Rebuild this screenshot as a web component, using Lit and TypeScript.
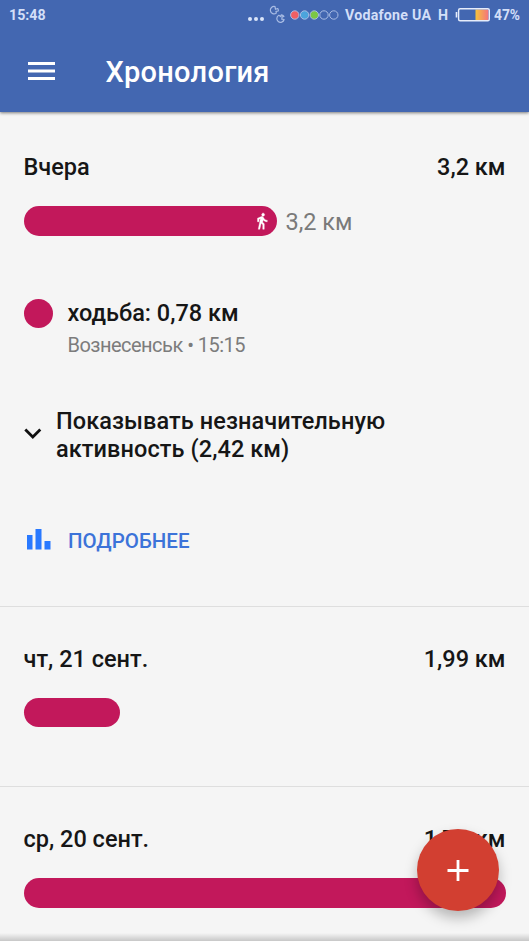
import { LitElement, html, css, svg, nothing } from "lit";
import { customElement, property } from "lit/decorators.js";

const walkIcon = svg`<path fill="#fff" stroke="#fff" stroke-width=".5" d="M13.5 5.500c1.100 0 2-.9 2-2s-.9-2-2-2-2 .9-2 2 .9 2 2 2zM9.800 8.900L7 23h2.100l1.800-8 2.100 2v6h2v-7.500l-2.100-2 .6-3C14.800 12 16.800 13 19 13v-2c-1.900 0-3.500-1-4.300-2.400l-1-1.600c-.4-.6-1-1-1.700-1-.3 0-.5.1-.8.1L6 8.300V13h2V9.600l1.800-.7"/>`;

@customElement("status-bar")
export class StatusBar extends LitElement {
  static styles = css`
    :host { display: flex; height: 30px; align-items: center; color: #d3dff8; font: 700 14.200px/30px Roboto, sans-serif; }
    .time { margin-left: 9px; width: 238px; }
    .status { display: block; flex: none; }
    .carrier { margin-left: 6px; width: 93px; letter-spacing: 0.25px; white-space: nowrap; }
    .net { width: 17px; }
    .battery { display: block; flex: none; margin-right: 4px; }
    .pct { font-size: 13.800px; white-space: nowrap; }
  `;
  render() {
    return html`
      <span class="time">15:48</span>
      <svg class="status" width="92" height="30" viewBox="247 0 92 30">
        <g fill="#dbe5fa">
          <circle cx="250" cy="19" r="2" /><circle cx="256" cy="19" r="2" /><circle cx="262" cy="19" r="2" />
        </g>
        <g fill="none" stroke="#a9bce4" stroke-width="1.2" stroke-linejoin="round">
          <path d="M275 6.600a3.700 3.700 0 1 0 1.300 6.500l-.3-1.800 2.300-.3a3.700 3.700 0 0 0-.5-2.500l-2.300.8z" />
          <path d="M278.800 15.300a3.700 3.700 0 1 0 5.300 4.200l-2.300-.3.300-2.400 1.800-.5a3.700 3.700 0 0 0-2.600-1.500l-.6 1.800z" />
        </g>
        <g stroke="#a9bce4" stroke-width="1">
          <circle cx="294.800" cy="15" r="4.200" fill="#f05f64" />
          <circle cx="304.600" cy="15" r="4.200" fill="#4ba4dc" />
          <circle cx="314.300" cy="15" r="4.200" fill="#7bc744" />
          <circle cx="324" cy="15" r="4.200" fill="none" />
          <circle cx="333.800" cy="15" r="4.200" fill="none" />
        </g>
      </svg>
      <span class="carrier">Vodafone UA</span>
      <span class="net">H</span>
      <svg class="battery" width="35" height="30" viewBox="455 0 35 30">
        <defs>
          <linearGradient id="charge"><stop offset="0" stop-color="#f5c33c" /><stop offset="1" stop-color="#f5737d" /></linearGradient>
        </defs>
        <rect x="475.500" y="9.500" width="13" height="10.500" fill="url(#charge)" />
        <rect x="458.600" y="8.700" width="30.700" height="12" rx="1.500" fill="none" stroke="#e6edfb" stroke-width="1.400" />
        <path d="M456.500 12v5.500" stroke="#e6edfb" stroke-width="1.600" />
      </svg>
      <span class="pct">47%</span>
    `;
  }
}

@customElement("day-section")
export class DaySection extends LitElement {
  @property() day = "";
  @property() total = "";
  @property() label = "";
  @property({ type: Number }) bar = 0;

  static styles = css`
    :host { display: block; padding: 39px 23.500px 0 23.500px; }
    .head { display: flex; justify-content: space-between; height: 28px; font: 500 23.500px/28px Roboto, sans-serif; color: #161616; }
    .track { display: flex; align-items: center; height: 29.500px; margin-top: 25px; }
    .bar { display: flex; align-items: center; justify-content: flex-end; height: 29.500px; border-radius: 15px; background: #c2185b; box-sizing: border-box; padding-right: 6px; }
    .label { margin-left: 9px; padding-top: 3px; font: 400 23.500px/28px Roboto, sans-serif; color: #7a7a7a; }
  `;
  render() {
    return html`
      <div class="head"><span>${this.day}</span><span>${this.total}</span></div>
      <div class="track">
        <div class="bar" style="width:${this.bar}px">
          ${this.label ? html`<svg width="18" height="18" viewBox="0 0 24 24">${walkIcon}</svg>` : nothing}
        </div>
        ${this.label ? html`<span class="label">${this.label}</span>` : nothing}
      </div>
      <slot></slot>
    `;
  }
}

@customElement("app-root")
export class AppRoot extends LitElement {
  static styles = css`
    :host { display: flex; flex-direction: column; position: relative; height: 941px; overflow: hidden; background: #f5f5f5; font-family: Roboto, sans-serif; color: #161616; }
    .header { flex: none; height: 111.500px; background: #4367b1; box-shadow: 0 1px 3px rgba(0, 0, 0, 0.5); }
    .toolbar { display: flex; align-items: center; height: 81px; }
    .menu { display: block; margin-left: 26.500px; width: 79px; }
    .title { font-size: 29px; line-height: 36px; font-weight: 500; letter-spacing: 0.25px; color: #fff; padding-top: 3px; }
    .day { flex: none; box-sizing: border-box; }
    .first, .second { border-bottom: 1px solid #dedede; }
    .first { height: 495.500px; padding-top: 41.500px; }
    .second { height: 180px; padding-top: 37.500px; }
    .third { padding-top: 38px; }
    .activity { display: flex; margin-top: 63px; height: 60px; }
    .dot { width: 29.500px; height: 29.500px; border-radius: 50%; background: #c2185b; margin-right: 14.500px; }
    .name { font-size: 23.500px; line-height: 28px; font-weight: 500; }
    .place { font-size: 20px; line-height: 28px; margin-top: 4px; letter-spacing: -0.52px; color: #7c7c7c; }
    .expand { display: flex; margin-top: 48px; height: 56px; font-size: 23.500px; line-height: 28px; font-weight: 500; letter-spacing: 0.08px; }
    .chevron { display: block; width: 32.500px; height: 56px; }
    .more { display: flex; margin-top: 64px; height: 28px; font-size: 20.500px; line-height: 28px; font-weight: 500; color: #3c73d9; }
    .chart { display: block; width: 44.500px; height: 28px; }
    .fab { position: absolute; left: 417.400px; top: 829.300px; width: 82px; height: 82px; border-radius: 50%; background: #d23f31; box-shadow: 0 7px 13px rgba(0, 0, 0, 0.26); }
    .fade { position: absolute; left: 0; right: 0; bottom: 0; height: 8px; background: linear-gradient(rgba(0, 0, 0, 0), rgba(0, 0, 0, 0.19)); }
  `;
  render() {
    return html`
      <header class="header">
        <status-bar></status-bar>
        <div class="toolbar">
          <svg class="menu" width="79" height="20" viewBox="0 0 79 20">
            <path d="M1 2.500h27M1 10h27M1 17.500h27" stroke="#fff" stroke-width="2.800" />
          </svg>
          <span class="title">Хронология</span>
        </div>
      </header>
      <day-section class="day first" day="Вчера" total="3,2 км" label="3,2 км" .bar=${253}>
        <div class="activity">
          <div class="dot"></div>
          <div>
            <div class="name">ходьба: 0,78 км</div>
            <div class="place">Вознесенськ • 15:15</div>
          </div>
        </div>
        <div class="expand">
          <svg class="chevron" viewBox="0 0 32.500 56"><path d="M1.300 22.500l7.500 7.500 7.500-7.500" fill="none" stroke="#111" stroke-width="2.800" /></svg>
          <div>Показывать незначительную<br />активность (2,42 км)</div>
        </div>
        <div class="more">
          <svg class="chart" viewBox="0 0 44.500 28"><path d="M3 8h5.500v14.500H3zM11.500 2h6v20.500h-6zM20.500 14h6v8.500h-6z" fill="#2979ff" /></svg>
          <span>ПОДРОБНЕЕ</span>
        </div>
      </day-section>
      <day-section class="day second" day="чт, 21 сент." total="1,99 км" .bar=${96}></day-section>
      <day-section class="day third" day="ср, 20 сент." total="1,78 км" .bar=${482}></day-section>
      <div class="fade"></div>
      <div class="fab">
        <svg width="82" height="82" viewBox="0 0 82 82"><path d="M41 31v21M30.500 41.500h21" stroke="#fff" stroke-width="2.800" /></svg>
      </div>
    `;
  }
}
